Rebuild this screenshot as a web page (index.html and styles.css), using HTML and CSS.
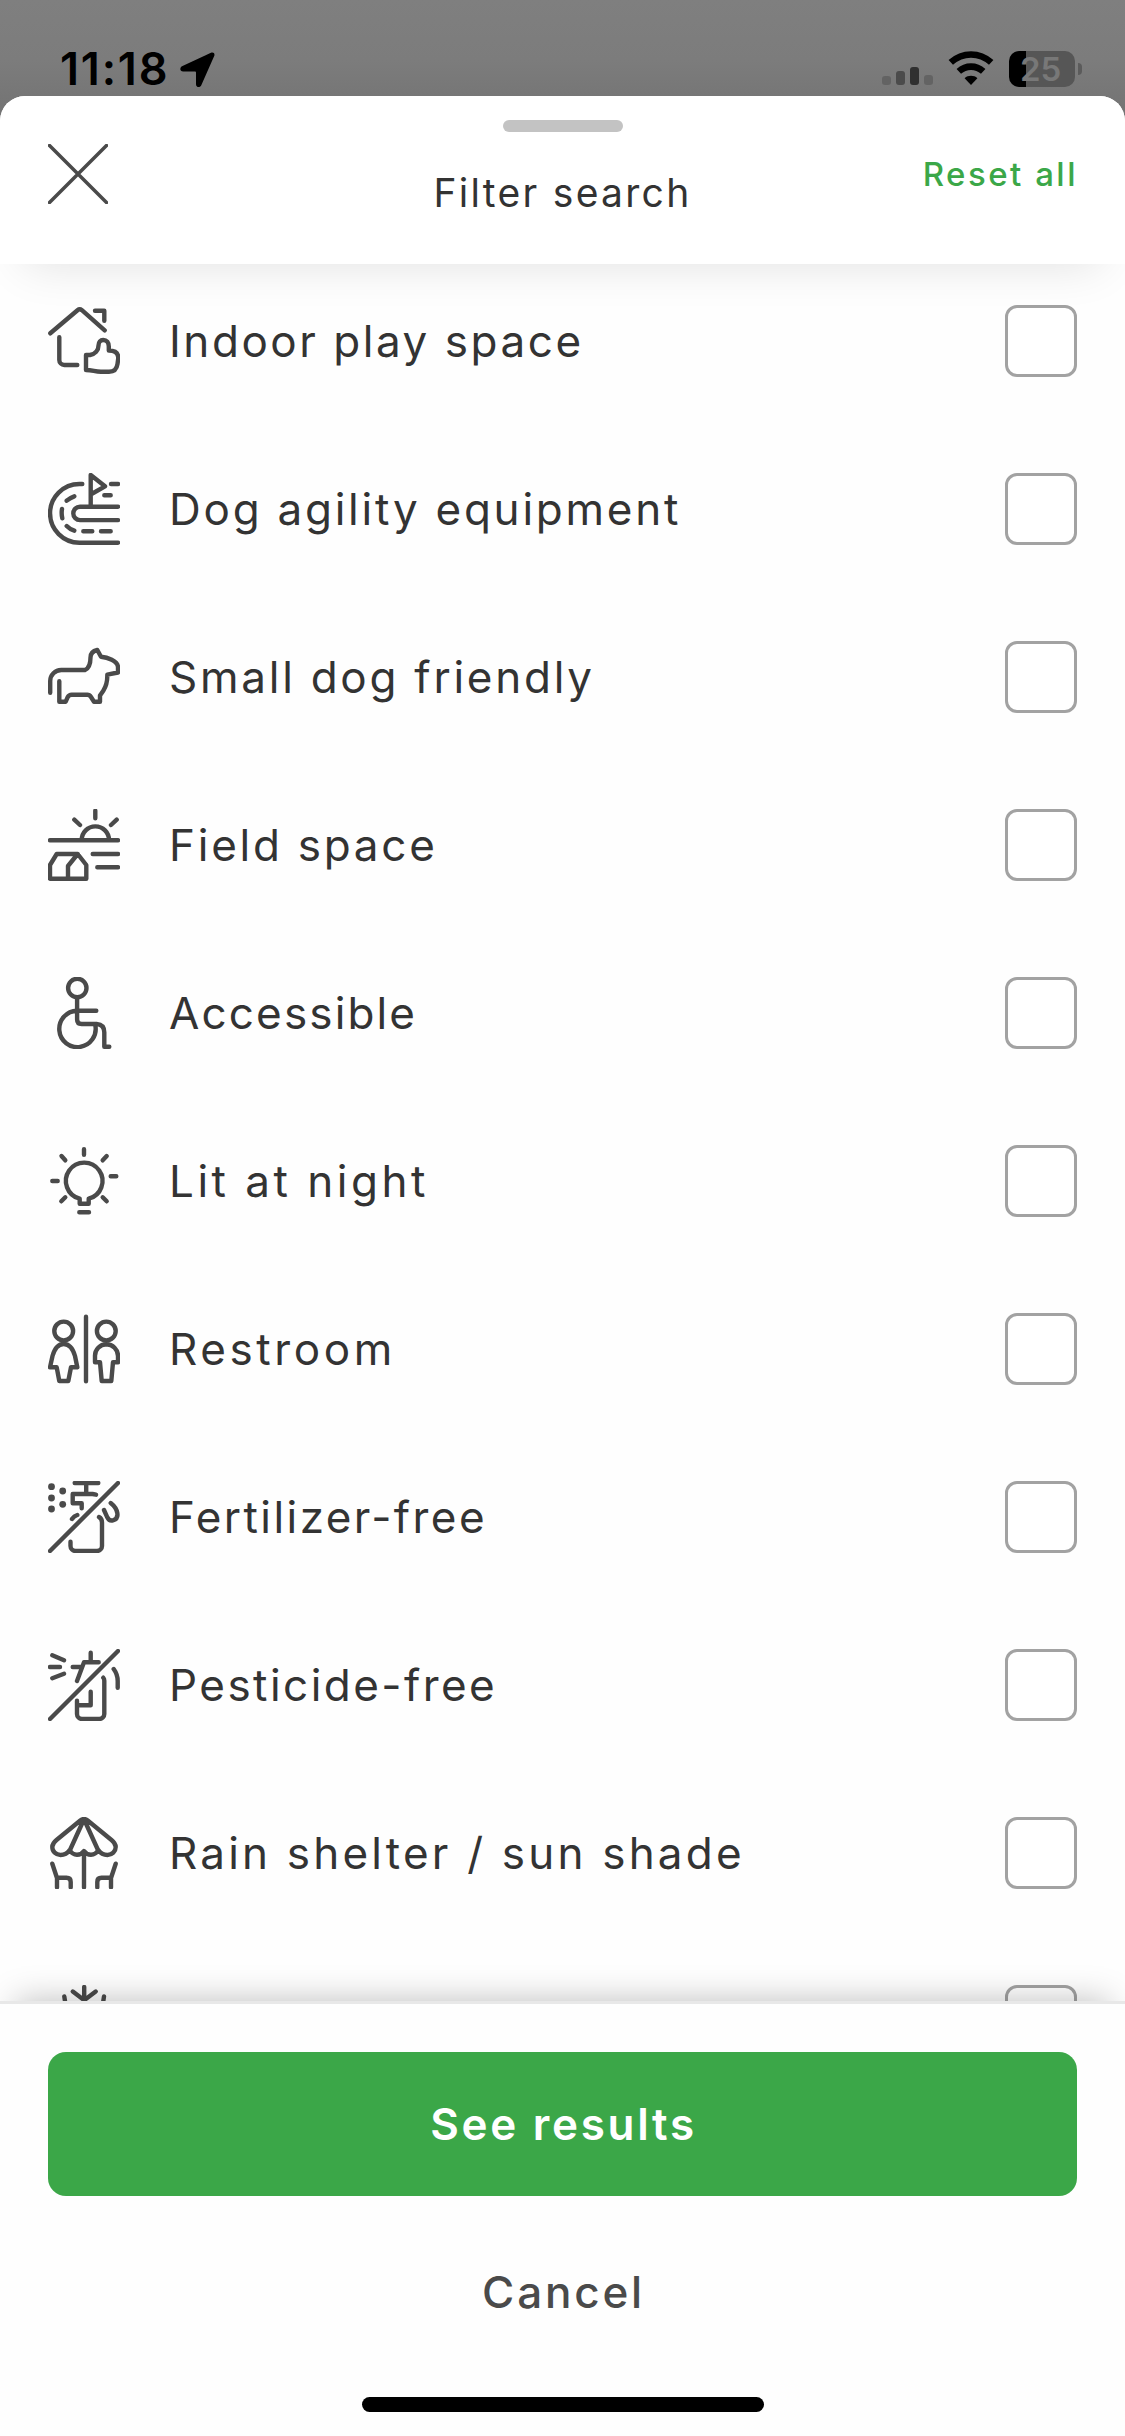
FILE: index.html
```
<!DOCTYPE html>
<html lang="en">
<head>
<meta charset="utf-8">
<title>Filter search</title>
<link rel="stylesheet" href="styles.css">
</head>
<body>
<div class="screen">
  <div class="status">
    <span class="time">11:18</span>
    <svg class="location" viewBox="0 0 36 36"><path d="M2.5 14 31 .8c2.400-1 4.200.8 3.200 3.200L21.400 33c-1.200 3-5.400 2.600-5.400-.8V20.500c0-.6-.3-.9-.9-.9H3.200C-.3 19.600-.7 15.500 2.500 14z"/></svg>
    <div class="status-right">
      <div class="signal"><i class="bar b1"></i><i class="bar b2"></i><i class="bar b3"></i><i class="bar b4"></i></div>
      <svg class="wifi" viewBox="0 0 46 34"><path d="M23 34 16.600 27.200c3.400-3.200 9.400-3.200 12.800 0z"/><path d="M10.800 20.400c7-6.400 17.400-6.400 24.400 0M2.800 11.400c11.800-10.600 28.600-10.600 40.400 0" fill="none" stroke="#000" stroke-width="6.600"/></svg>
      <div class="battery"><span class="cell">25</span><i class="knob"></i></div>
    </div>
  </div>

  <div class="sheet">
    <header class="header">
      <div class="handle"></div>
      <div class="header-row">
        <svg class="close" viewBox="0 0 60 60"><path d="M1.500 1.500 58.500 58.500M58.500 1.500 1.500 58.500"/></svg>
        <h1 class="title">Filter search</h1>
        <a class="reset">Reset all</a>
      </div>
    </header>

    <main class="list">
      <label class="row">
        <svg class="icon" viewBox="0 0 72 72"><path d="M2.300 28.300 29.500 5.200q2.200-1.800 4.400 0L56.700 25.300M47 5.700h9.300v10M11.300 32.300V55a5 5 0 0 0 5 5h13"/><path d="M38 50h4c5-1 8.500-4.500 8.500-9.500 0-3.500 2-5.500 4.700-5.500 3.500 0 5.600 2.600 5.600 6.500v4c6.200 0 9.500 2.500 9.500 7.500l-.8 6c-.7 5-4 7.800-8.500 7.800h-8C46.500 66.800 45 65 38 65z"/></svg>
        <span class="label l-indoor">Indoor play space</span><span class="check"></span>
      </label>
      <label class="row">
        <svg class="icon" viewBox="0 0 72 72"><path d="M34.300 11h-2.900a29.350 29.350 0 0 0 0 58.700H70M42.700 33V2L57 13.300 43.500 21M63 11h7M56.300 22.300h6.400M70 33.700H32a6.700 6.700 0 0 0 0 13.400h38M26.300 23.300q-4.300 1.500-7.600 4.400M14 36q-.8 4.600.3 9.300M18.700 53q3.200 3.300 7.600 4.700M35.300 58.300h9M53 58.300h9.700"/></svg>
        <span class="label">Dog agility equipment</span><span class="check"></span>
      </label>
      <label class="row">
        <svg class="icon" viewBox="0 0 72 72"><path d="M2.200 51.700V40a11 11 0 0 1 11-11H37c4.500-2 5.500-7 5.500-12.500 0-4.500 2.500-6.500 6.800-7.500l3.700 6.700c6 .5 17 4 17 10.500v5.300l-10.700 2.200c.2 7-1.300 12-4 16L52 54.500v6.200h-6L43 56q-1.500-2.300-3.700-2.300H23.700q-2.700 0-4 2.400l-2 4.600h-6.400V40.300"/></svg>
        <span class="label">Small dog friendly</span><span class="check"></span>
      </label>
      <label class="row">
        <svg class="icon" viewBox="0 0 72 72"><path d="M47.300 1.700v7.600M26.300 10.700l5.700 5.300M68.700 10.700 63 16M2 31.300h68M33.700 31a13.500 13.500 0 0 1 27.300 0M2 69.700V56L8.700 45h21l8.600 11v13.700zM29.700 45 20 57v12.700M44.700 45H70M49.300 58.300H70"/></svg>
        <span class="label">Field space</span><span class="check"></span>
      </label>
      <label class="row">
        <svg class="icon" viewBox="0 0 72 72"><circle cx="29.300" cy="11" r="9.200"/><path d="M29.100 20.500v22q0 4.500 4.500 4.500h15.100q7.600.5 7.600 8.500v14.200h5M29 33.700h19.300M29 33.700a18.200 18.200 0 1 0 18.300 14.500"/></svg>
        <span class="label l-accessible">Accessible</span><span class="check"></span>
      </label>
      <label class="row">
        <svg class="icon" viewBox="0 0 72 72"><path d="M31.700 58.700v-5a18.300 18.300 0 1 1 9 0v5zM31.300 67.300H41M36 4.300v5.400M13.500 11l3.800 4.300M58.700 11l-4 4.300M4.300 36h5.400M62.700 31.300h5.600M17.300 52.300l-4 4M54.700 52.300l4 4"/></svg>
        <span class="label l-lit">Lit at night</span><span class="check"></span>
      </label>
      <label class="row">
        <svg class="icon" viewBox="0 0 72 72"><circle cx="15.700" cy="18" r="9.400"/><circle cx="58.300" cy="18" r="9.400"/><path d="M38 3.700v64.600M15.700 31C22 31 25 36 27 43l2.300 11.300H23L20.300 68h-9L8.700 54.300H2L4.500 43C6.500 36 9.500 31 15.700 31zM58.300 31.300A11.700 11.700 0 0 1 70 43v6.300h-5L63.300 68h-9.600L52 49.300h-5V43a11.500 11.500 0 0 1 11.300-11.700z"/></svg>
        <span class="label l-restroom">Restroom</span><span class="check"></span>
      </label>
      <label class="row">
        <svg class="icon" viewBox="0 0 72 72"><g class="dots"><circle cx="3.500" cy="5.700" r="3.400"/><circle cx="3.500" cy="17" r="3.400"/><circle cx="3.500" cy="28" r="3.400"/><circle cx="14.700" cy="10" r="3.400"/><circle cx="14.700" cy="23.300" r="3.400"/></g><path d="M2 70 70 2M26.700 2h23.600M38.200 2v11M48 13.700 44.500 13H24.700v9.300h9v5M24 38q2-3 5.300-4M51 36c2.200 1.200 3 2.800 3 5.500V65a5 5 0 0 1-5 5H27.500a5 5 0 0 1-5-5v-4.300M56 29l3.300 7.300c1.200 2.500 3.500 3.800 6 2.900 3.200-1.100 4.700-3.400 4-7.200q-.9-5.500-6.600-10"/></svg>
        <span class="label l-free">Fertilizer-free</span><span class="check"></span>
      </label>
      <label class="row">
        <svg class="icon" viewBox="0 0 72 72"><path d="M2 70 70 2M4.300 6.300l11.700 5M2 18h10M4.300 29.300l11.700-4.600M42.700 3.700v9.600M50.700 13.300H36L29 32M24.700 18H34M55.300 28.700q1 1 1 3V65a5 5 0 0 1-5 5H34a5 5 0 0 1-5-5V51.700M42.700 42.700v13.600H29M65.700 20q4 5.500 4 12v6.700"/></svg>
        <span class="label l-free">Pesticide-free</span><span class="check"></span>
      </label>
      <label class="row">
        <svg class="icon" viewBox="0 0 72 72"><path d="M36 2q-2 0-4 1.700L8.500 23C5.300 25.600 4.300 27.300 4.300 30c0 4.500 3.700 8 8.200 8 4 0 7-1.700 9.200-5 1.800 3.200 4.300 4.700 7.300 4.700s5.500-1.400 7-3.700c1.500 2.300 4 3.700 7 3.700s5.500-1.500 7.300-4.700c2.200 3.300 5.200 5 9.200 5 4.500 0 8.200-3.500 8.200-8 0-2.700-1-4.400-4.200-7L40 3.700Q38 2 36 2zM35.200 4 22 33M36.800 4 50 33M36 34.500v35.800M4.300 46.700 9 61v9.300M9 60.700h9.500q4.200 0 4.200 4.200v5.400M67.700 46.700 63 61v9.300M63 60.700h-9.500q-4.200 0-4.200 4.200v5.400"/></svg>
        <span class="label l-rain">Rain shelter / sun shade</span><span class="check"></span>
      </label>
      <div class="row">
        <svg class="icon" viewBox="0 0 72 72"><path d="M36.200 2v66M24.800 6.500l11.400 8.700 11.500-8.700M16.300 11.500l2 13M56 11.500l-2 13"/></svg>
        <span class="label"></span><span class="check"></span>
      </div>
    </main>

    <footer class="footer">
      <button class="primary">See results</button>
      <button class="cancel">Cancel</button>
      <div class="home"></div>
    </footer>
  </div>
</div>
</body>
</html>
```
FILE: styles.css
```
* { box-sizing: border-box; }
body { margin: 0; font-family: Inter, "Liberation Sans", sans-serif; color: #333; }
.screen { width: 1125px; height: 2436px; overflow: hidden; background: linear-gradient(#7f7f7f, #7c7c7c 60px, #747474 110px); display: flex; flex-direction: column; }

/* Status bar */
.status { height: 96px; flex: none; display: flex; align-items: flex-start; padding: 51px 43px 0 60px; color: #000; }
.time { width: 120px; font-size: 45px; line-height: 36px; font-weight: 600; letter-spacing: 1.800px; white-space: nowrap; }
.location { width: 36px; height: 36px; margin-top: 1px; }
.status-right { margin-left: auto; display: flex; }
.signal { display: flex; align-items: flex-end; gap: 5px; height: 34px; }
.bar { width: 9px; border-radius: 3px; background: #636363; }
.b1 { height: 9px; }
.b2 { height: 14px; background: #4b4b4b; }
.b3 { height: 18px; background: #303030; }
.b4 { height: 10px; }
.wifi { width: 46px; height: 34px; margin: 0 15px; }
.battery { display: flex; align-items: center; gap: 3px; height: 36px; }
.cell { width: 66px; height: 36px; border-radius: 10px; background: linear-gradient(90deg, #000 17px, #565656 17px); color: #787878; font-size: 33px; font-weight: 600; line-height: 36px; padding-left: 11px; }
.knob { width: 4px; height: 12px; border-radius: 0 4px 4px 0; background: #5b5b5b; }

/* Bottom sheet */
.sheet { flex: 1; min-height: 0; display: flex; flex-direction: column; background: #fff; border-radius: 25px 25px 0 0; }
.header { position: relative; z-index: 1; flex: none; height: 168px; padding: 24px 48px 0; background: #fff; border-radius: 25px 25px 0 0; box-shadow: 0 24px 48px -24px rgba(0, 0, 0, .12); }
.handle { width: 120px; height: 12px; margin: 0 auto 12px; border-radius: 6px; background: #c3c3c3; }
.header-row { display: grid; grid-template-columns: 1fr auto 1fr; align-items: start; }
.close { width: 60px; height: 60px; fill: none; stroke: #4a4a4a; stroke-width: 3.500; stroke-linecap: round; }
.title { margin: 0; font-size: 39px; line-height: 97px; font-weight: 400; letter-spacing: 2.300px; }
.reset { justify-self: end; margin-right: -1px; font-size: 33px; line-height: 61px; font-weight: 500; letter-spacing: 2.500px; color: #3ba748; }

/* Filter rows */
.list { flex: 1; min-height: 0; overflow: hidden; display: flex; flex-direction: column; gap: 96px; padding: 41px 48px 0; background: #fefefe; }
.row { flex: none; height: 72px; display: flex; align-items: center; }
.icon { flex: none; width: 72px; height: 72px; fill: none; stroke: #4a4a4a; stroke-width: 4.400; stroke-linecap: round; stroke-linejoin: round; }
.dots { fill: #4a4a4a; stroke: none; }
.label { flex: 1; padding-left: 49px; font-size: 44px; line-height: 72px; letter-spacing: 2.750px; white-space: nowrap; }
.l-indoor { letter-spacing: 2.550px; }
.l-accessible { letter-spacing: 2.150px; }
.l-lit { letter-spacing: 3.500px; }
.l-restroom { letter-spacing: 3.600px; }
.l-free { letter-spacing: 2.450px; }
.l-rain { letter-spacing: 3.200px; }
.check { flex: none; width: 72px; height: 72px; border: 3px solid #a2a2a2; border-radius: 12px; background: #fff; }

/* Actions */
.footer { position: relative; z-index: 1; flex: none; height: 435px; padding: 48px 48px 0; display: flex; flex-direction: column; align-items: center; background: #fefefe; border-top: 3px solid #e8e8e8; box-shadow: 0 -16px 32px -16px rgba(0, 0, 0, .26); }
button { width: 100%; height: 144px; border: 0; padding: 0 0 1px 2px; border-radius: 18px; font: 600 44px Inter, "Liberation Sans", sans-serif; letter-spacing: 2.700px; }
.primary { background: #3ba748; color: #fff; }
.cancel { margin-top: 24px; background: none; color: #4a4a4a; font-weight: 500; letter-spacing: 2.800px; }
.home { width: 402px; height: 15px; margin-top: 33px; border-radius: 8px; background: #000; }
```
